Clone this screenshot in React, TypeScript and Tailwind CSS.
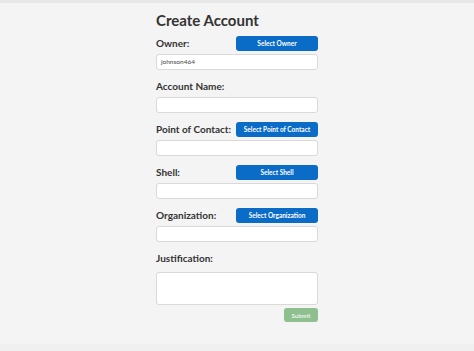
import React from "react";

function Field({ label, button, value }: { label: string; button?: string; value?: string }) {
  return (
    <div className="flex flex-col">
      <div className="flex h-[15px] items-center justify-between">
        <span className="whitespace-nowrap text-[10px] font-bold text-[#333]">{label}</span>
        {button && (
          <button className="flex h-[15px] w-[82px] shrink-0 items-center justify-center whitespace-nowrap rounded-[3px] bg-[#0b6cc7] text-[6.5px] font-bold text-white">
            {button}
          </button>
        )}
      </div>
      <div className="mt-[3px] flex h-[16px] items-center rounded-[3px] border border-[#d9d9d9] bg-white px-[4px] text-[6.5px] text-[#444]">
        {value}
      </div>
    </div>
  );
}

export default function App() {
  return (
    <div className="flex min-h-[351px] w-full flex-col bg-[#f4f4f4] font-['Lato','Noto_Sans',sans-serif]">
      <div className="h-[3px] w-full bg-[#e7e7e7]" />
      <div className="mx-auto flex w-[162px] flex-col pt-[8px]">
        <h1 className="h-[25px] text-[15px] font-bold leading-[19px] text-[#333]">Create Account</h1>
        <div className="flex flex-col gap-[9px]">
          <Field label="Owner:" button="Select Owner" value="johnson464" />
          <Field label="Account Name:" />
          <Field label="Point of Contact:" button="Select Point of Contact" />
          <Field label="Shell:" button="Select Shell" />
          <Field label="Organization:" button="Select Organization" />
          <div className="flex flex-col">
            <div className="flex h-[15px] items-center">
              <span className="whitespace-nowrap text-[10px] font-bold text-[#333]">Justification:</span>
            </div>
            <div className="mt-[6px] h-[33px] rounded-[3px] border border-[#d9d9d9] bg-white" />
          </div>
        </div>
        <div className="mt-[3px] flex justify-end">
          <button className="flex h-[14px] w-[34px] items-center justify-center rounded-[3px] bg-[#8dbf8f] text-[6px] font-bold text-[#e8f3e8]">
            Submit
          </button>
        </div>
      </div>
      <div className="flex-1" />
      <div className="h-[7px] w-full bg-[#f0f0f0]" />
    </div>
  );
}
